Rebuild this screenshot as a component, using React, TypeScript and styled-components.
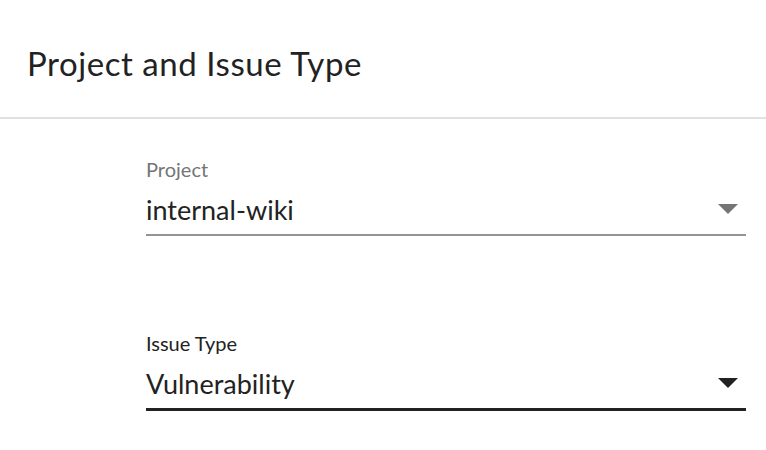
import React from 'react';
import styled, { createGlobalStyle } from 'styled-components';

const GlobalStyle = createGlobalStyle`
  html, body {
    margin: 0;
    padding: 0;
    background: #ffffff;
  }
  body {
    font-family: Lato, "Open Sans", sans-serif;
    color: #222222;
  }
`;

const Page = styled.div`
  width: 766px;
  height: 450px;
  overflow: hidden;
  background: #ffffff;
`;

const Header = styled.header`
  height: 119px;
  display: flex;
  align-items: center;
  padding: 10px 27px 0;
  box-sizing: border-box;
  border-bottom: 2px solid #e1e1e1;
`;

const Title = styled.h1`
  margin: 0;
  font-size: 33px;
  font-weight: 400;
  letter-spacing: 0.55px;
  color: #222222;
  line-height: 1;
`;

const Form = styled.div`
  display: flex;
  flex-direction: column;
  gap: 95px;
  padding: 38px 0 0 146px;
  width: 600px;
`;

const Field = styled.div`
  display: flex;
  flex-direction: column;
`;

const Label = styled.label<{ $active?: boolean }>`
  font-size: 20px;
  line-height: 24px;
  color: ${(p) => (p.$active ? '#222222' : '#757575')};
`;

const SelectRow = styled.div<{ $active?: boolean }>`
  display: flex;
  align-items: center;
  justify-content: space-between;
  height: 50px;
  padding: 3px 8px 0 0;
  border-bottom: ${(p) => (p.$active ? '3px solid #222222' : '2px solid #949494')};
`;

const Value = styled.span`
  font-size: 27px;
  color: #222222;
`;

const Caret = styled.svg`
  width: 20px;
  height: 10px;
  flex-shrink: 0;
`;

interface SelectFieldProps {
  label: string;
  value: string;
  active?: boolean;
}

const SelectField: React.FC<SelectFieldProps> = ({ label, value, active }) => (
  <Field>
    <Label $active={active}>{label}</Label>
    <SelectRow $active={active}>
      <Value>{value}</Value>
      <Caret viewBox="0 0 20 10">
        <path d="M0 0 L20 0 L10 10 Z" fill={active ? '#222222' : '#757575'} />
      </Caret>
    </SelectRow>
  </Field>
);

const App: React.FC = () => {
  return (
    <Page>
      <GlobalStyle />
      <Header>
        <Title>Project and Issue Type</Title>
      </Header>
      <Form>
        <SelectField label="Project" value="internal-wiki" />
        <SelectField label="Issue Type" value="Vulnerability" active />
      </Form>
    </Page>
  );
};

export default App;
